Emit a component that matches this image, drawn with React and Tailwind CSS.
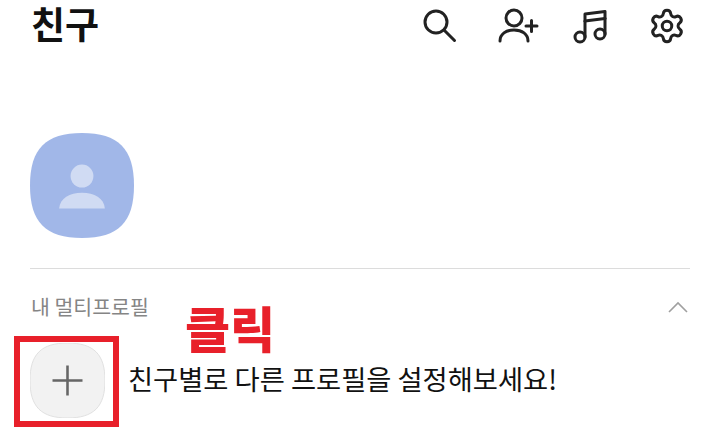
import React from 'react';
import { Settings } from 'lucide-react';

const squircle = 'M50 0C85 0 100 15 100 50C100 85 85 100 50 100C15 100 0 85 0 50C0 15 15 0 50 0Z';

function TopIcons() {
  return (
    <div className="flex items-center text-[#222]">
      {/* search */}
      <svg width="36" height="36" viewBox="0 0 36 36" fill="none" stroke="currentColor" strokeWidth="3" strokeLinecap="round" className="mr-[40px]">
        <circle cx="14" cy="14" r="11" />
        <path d="M22 22L32.500 32.500" />
      </svg>
      {/* add friend */}
      <svg width="42" height="36" viewBox="0 0 42 36" fill="none" stroke="currentColor" strokeWidth="3" strokeLinecap="round" className="mr-[33px]">
        <circle cx="16" cy="10" r="8" />
        <path d="M2 33C2 26 8 22 16 22C24 22 30 26 30 33" />
        <path d="M28 18H39M33.500 12.500V23.500" />
      </svg>
      {/* music */}
      <svg width="36" height="36" viewBox="0 0 36 36" fill="none" stroke="currentColor" strokeWidth="3" strokeLinecap="round" strokeLinejoin="round" className="mr-[39px]">
        <circle cx="7" cy="29" r="5" />
        <circle cx="27" cy="26" r="5" />
        <path d="M12 29V6L32 3.500V26" />
        <path d="M12 13L32 10.500" />
      </svg>
      <Settings size={38} strokeWidth={1.9} />
    </div>
  );
}

export default function App() {
  return (
    <div className="relative h-[427px] w-[720px] overflow-hidden bg-white font-['Noto_Sans_CJK_KR','Noto_Sans',sans-serif]">
      <header className="flex h-[51px] items-center justify-between pl-[31px] pr-[34px]">
        <h1 className="pb-[5px] text-[37px] font-bold leading-[44px] text-[#111]">친구</h1>
        <TopIcons />
      </header>

      <div className="mx-[30px] mt-[82px] border-b border-[#dcdcdc] pb-[30px]">
        <div className="relative h-[105px] w-[104px]">
          <svg viewBox="0 0 100 100" className="h-full w-full" preserveAspectRatio="none">
            <path d={squircle} fill="#a1b7e8" />
            <circle cx="50" cy="41" r="11" fill="#d0dbf3" />
            <path d="M28 72C29 62 38 57 50 57C62 57 71 62 72 72Z" fill="#d0dbf3" />
          </svg>
        </div>
      </div>

      <div className="mx-[30px] mt-[24px] flex h-[28px] items-center justify-between">
        <span className="pb-px pl-px text-[20.500px] leading-none text-[#858585]">내 멀티프로필</span>
        <svg width="20" height="12" viewBox="0 0 20 12" fill="none" stroke="#a0a0a0" strokeWidth="1.600" className="mr-[2px]">
          <path d="M1 11L10 2L19 11" />
        </svg>
      </div>

      <div className="ml-[30px] mt-[22px] flex items-center gap-[23px]">
        <div className="relative h-[75px] w-[75px]">
          <svg viewBox="0 0 100 100" className="h-full w-full">
            <path d={squircle} fill="#f2f2f2" stroke="#dedede" strokeWidth="1.200" />
            <path d="M50 30V70M30 50H70" stroke="#666" strokeWidth="3.400" />
          </svg>
        </div>
        <p className="pb-[4px] text-[27.300px] leading-none text-[#111]">친구별로 다른 프로필을 설정해보세요!</p>
      </div>

      {/* annotation drawn over the screenshot */}
      <div className="absolute left-[14px] top-[336px] h-[91px] w-[105px] border-[6px] border-[#e8202a]" />
      <span className="absolute left-[185px] top-[293px] text-[49px] font-black leading-[1.4] text-[#e8202a]">클릭</span>
    </div>
  );
}
